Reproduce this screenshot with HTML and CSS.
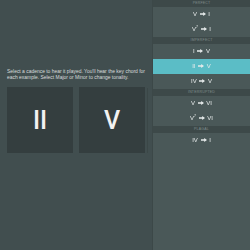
FILE: index.html
```html
<!DOCTYPE html>
<html>
<head>
    <title>Cadences</title>
    <link rel="stylesheet" href="styles.css">
</head>
<body>
    <div class="app">
        <div class="main">
            <p class="intro">Select a cadence to hear it played. You'll hear the key chord for each example. Select Major or Minor to change tonality.</p>
            <div class="chords">
                <div class="chord">II</div>
                <div class="chord">V</div>
            </div>
        </div>

        <div class="sidebar">
            <div class="group-title">Perfect</div>
            <div class="row">V <svg class="arrow" viewBox="0 0 6 4"><path d="M0 1.3H3.2V0L6 2L3.2 4V2.7H0Z"/></svg> I</div>
            <div class="row">V<sup>7</sup> <svg class="arrow" viewBox="0 0 6 4"><path d="M0 1.3H3.2V0L6 2L3.2 4V2.7H0Z"/></svg> I</div>

            <div class="group-title">Imperfect</div>
            <div class="row">I <svg class="arrow" viewBox="0 0 6 4"><path d="M0 1.3H3.2V0L6 2L3.2 4V2.7H0Z"/></svg> V</div>
            <div class="row selected">II <svg class="arrow" viewBox="0 0 6 4"><path d="M0 1.3H3.2V0L6 2L3.2 4V2.7H0Z"/></svg> V</div>
            <div class="row">IV <svg class="arrow" viewBox="0 0 6 4"><path d="M0 1.3H3.2V0L6 2L3.2 4V2.7H0Z"/></svg> V</div>

            <div class="group-title">Interrupted</div>
            <div class="row">V <svg class="arrow" viewBox="0 0 6 4"><path d="M0 1.3H3.2V0L6 2L3.2 4V2.7H0Z"/></svg> VI</div>
            <div class="row">V<sup>7</sup> <svg class="arrow" viewBox="0 0 6 4"><path d="M0 1.3H3.2V0L6 2L3.2 4V2.7H0Z"/></svg> VI</div>

            <div class="group-title">Plagal</div>
            <div class="row">IV <svg class="arrow" viewBox="0 0 6 4"><path d="M0 1.3H3.2V0L6 2L3.2 4V2.7H0Z"/></svg> I</div>
        </div>
    </div>
</body>
</html>
```

FILE: styles.css
```css
body {
    margin: 0;
    font-family: "Liberation Sans", Arial, sans-serif;
    background-color: #414e4f;
    -webkit-font-smoothing: antialiased;
}
.app {
    display: flex;
    width: 250px;
    height: 250px;
}
.main {
    width: 152px;
    padding: 69px 7px 0 7px;
    box-sizing: border-box;
    position: relative;
}
.main::after {
    content: "";
    position: absolute;
    left: 147px;
    top: 88px;
    width: 1px;
    height: 65px;
    background-color: #3b4747;
}
.intro {
    margin: 0;
    font-size: 4.95px;
    line-height: 6px;
    color: #d8dcdc;
}
.chords {
    display: flex;
    gap: 6px;
    margin-top: 6px;
}
.chord {
    width: 66px;
    height: 66px;
    background-color: #343e3f;
    color: #f2f2f2;
    font-family: Roboto, "Liberation Sans", sans-serif;
    font-weight: 500;
    font-size: 25px;
    display: flex;
    align-items: center;
    justify-content: center;
}
.sidebar {
    width: 98px;
    background-color: #4a5858;
    border-left: 1px solid #3c4848;
    box-sizing: border-box;
}
.group-title {
    height: 7px;
    line-height: 7px;
    background-color: #3d4949;
    color: #7e8b8b;
    font-size: 3.5px;
    text-transform: uppercase;
    text-align: center;
    letter-spacing: 0.2px;
}
.row {
    height: 15px;
    line-height: 15px;
    text-align: center;
    color: #e6eaea;
    font-size: 6px;
    will-change: transform;
}
.row sup {
    font-size: 3.5px;
    line-height: 0;
}
.arrow {
    width: 6px;
    height: 4px;
    margin: 0 1px;
    fill: #e6eaea;
    vertical-align: 0;
}
.selected {
    background-color: #5bbdc6;
}
```
